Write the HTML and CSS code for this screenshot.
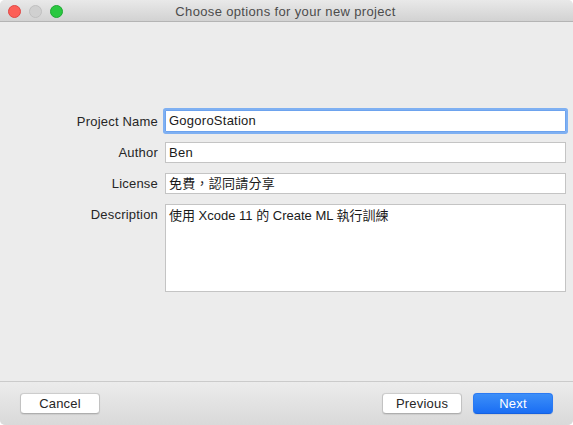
FILE: index.html
```html
<!DOCTYPE html>
<html>
<head>
<meta charset="utf-8">
<link rel="stylesheet" href="styles.css">
</head>
<body>
<div class="window">
  <div class="titlebar">
    <div class="lights">
      <span class="light red"></span>
      <span class="light gray"></span>
      <span class="light green"></span>
    </div>
    <div class="title">Choose options for your new project</div>
  </div>
  <div class="content">
    <div class="form">
      <div class="label">Project Name</div>
      <div class="field focused">GogoroStation</div>
      <div class="label">Author</div>
      <div class="field">Ben</div>
      <div class="label">License</div>
      <div class="field">免費，認同請分享</div>
      <div class="label">Description</div>
      <div class="field area">使用 Xcode 11 的 Create ML 執行訓練</div>
    </div>
  </div>
  <div class="footer">
    <button class="btn">Cancel</button>
    <div class="spacer"></div>
    <button class="btn">Previous</button>
    <button class="btn primary">Next</button>
  </div>
</div>
</body>
</html>
```

FILE: styles.css
```css
html, body {
  margin: 0;
  padding: 0;
  background: #ffffff;
}
body {
  width: 573px;
  height: 425px;
  overflow: hidden;
  font-family: "Liberation Sans", "Noto Sans CJK TC", sans-serif;
  font-size: 13px;
  color: #262626;
}
.window {
  width: 573px;
  height: 425px;
  background: #ececec;
  border-radius: 5px;
  overflow: hidden;
  display: flex;
  flex-direction: column;
}
.titlebar {
  height: 21px;
  flex: none;
  position: relative;
  background: linear-gradient(#e9e9e9, #d2d2d2);
  border-bottom: 1px solid #b4b4b4;
  display: flex;
  align-items: center;
  justify-content: center;
}
.lights {
  position: absolute;
  left: 8px;
  top: 5px;
  display: flex;
  gap: 8px;
}
.light {
  width: 11px;
  height: 11px;
  border-radius: 50%;
  border: 0.5px solid transparent;
  display: block;
}
.red { background: #fc5f57; border-color: #df4744; }
.gray { background: #d0d0d0; border-color: #bfbfbf; }
.green { background: #2ac840; border-color: #1ea832; }
.title {
  color: #4c4c4c;
  font-size: 13px;
  letter-spacing: 0.35px;
  padding-top: 1px;
  margin-left: -2px;
}
.content {
  flex: 1;
  padding-top: 88px;
}
.form {
  display: grid;
  grid-template-columns: 158px 401px;
  column-gap: 7px;
  row-gap: 10px;
  align-items: center;
}
.label {
  text-align: right;
  color: #262626;
  letter-spacing: 0.2px;
}
.form .label:nth-last-child(2) {
  align-self: start;
  padding-top: 3px;
}
.field {
  height: 21px;
  box-sizing: border-box;
  background: #ffffff;
  border: 1px solid #c4c4c4;
  padding: 0 3px;
  line-height: 19px;
  white-space: nowrap;
  color: #1a1a1a;
  letter-spacing: 0.25px;
}
.field.focused {
  height: 22px;
  line-height: 20px;
  border-color: #6da3ee;
  box-shadow: 0 0 0 2px #7fb0f2;
  border-radius: 1px;
}
.field.area {
  height: 88px;
  padding-top: 1px;
  letter-spacing: 0;
}
.footer {
  height: 32px;
  flex: none;
  border-top: 1px solid #cbcbcb;
  background: linear-gradient(#ececec, #d9d9d9);
  display: flex;
  align-items: flex-start;
  padding: 11px 20px 0 20px;
  gap: 11px;
}
.spacer { flex: 1; }
.btn {
  width: 80px;
  height: 21px;
  box-sizing: border-box;
  border: 1px solid #c2c2c2;
  border-top-color: #cdcdcd;
  border-bottom-color: #aeaeae;
  border-radius: 4px;
  background: #ffffff;
  font-family: "Liberation Sans", sans-serif;
  font-size: 13px;
  letter-spacing: 0.2px;
  color: #262626;
  padding: 0;
  line-height: 19px;
  box-shadow: 0 0.5px 1px rgba(0,0,0,0.08);
}
.btn.primary {
  background: linear-gradient(#3d8ff8, #1a6ef4);
  border-color: #2b7af3;
  border-bottom-color: #1561e0;
  color: #ffffff;
}
```
